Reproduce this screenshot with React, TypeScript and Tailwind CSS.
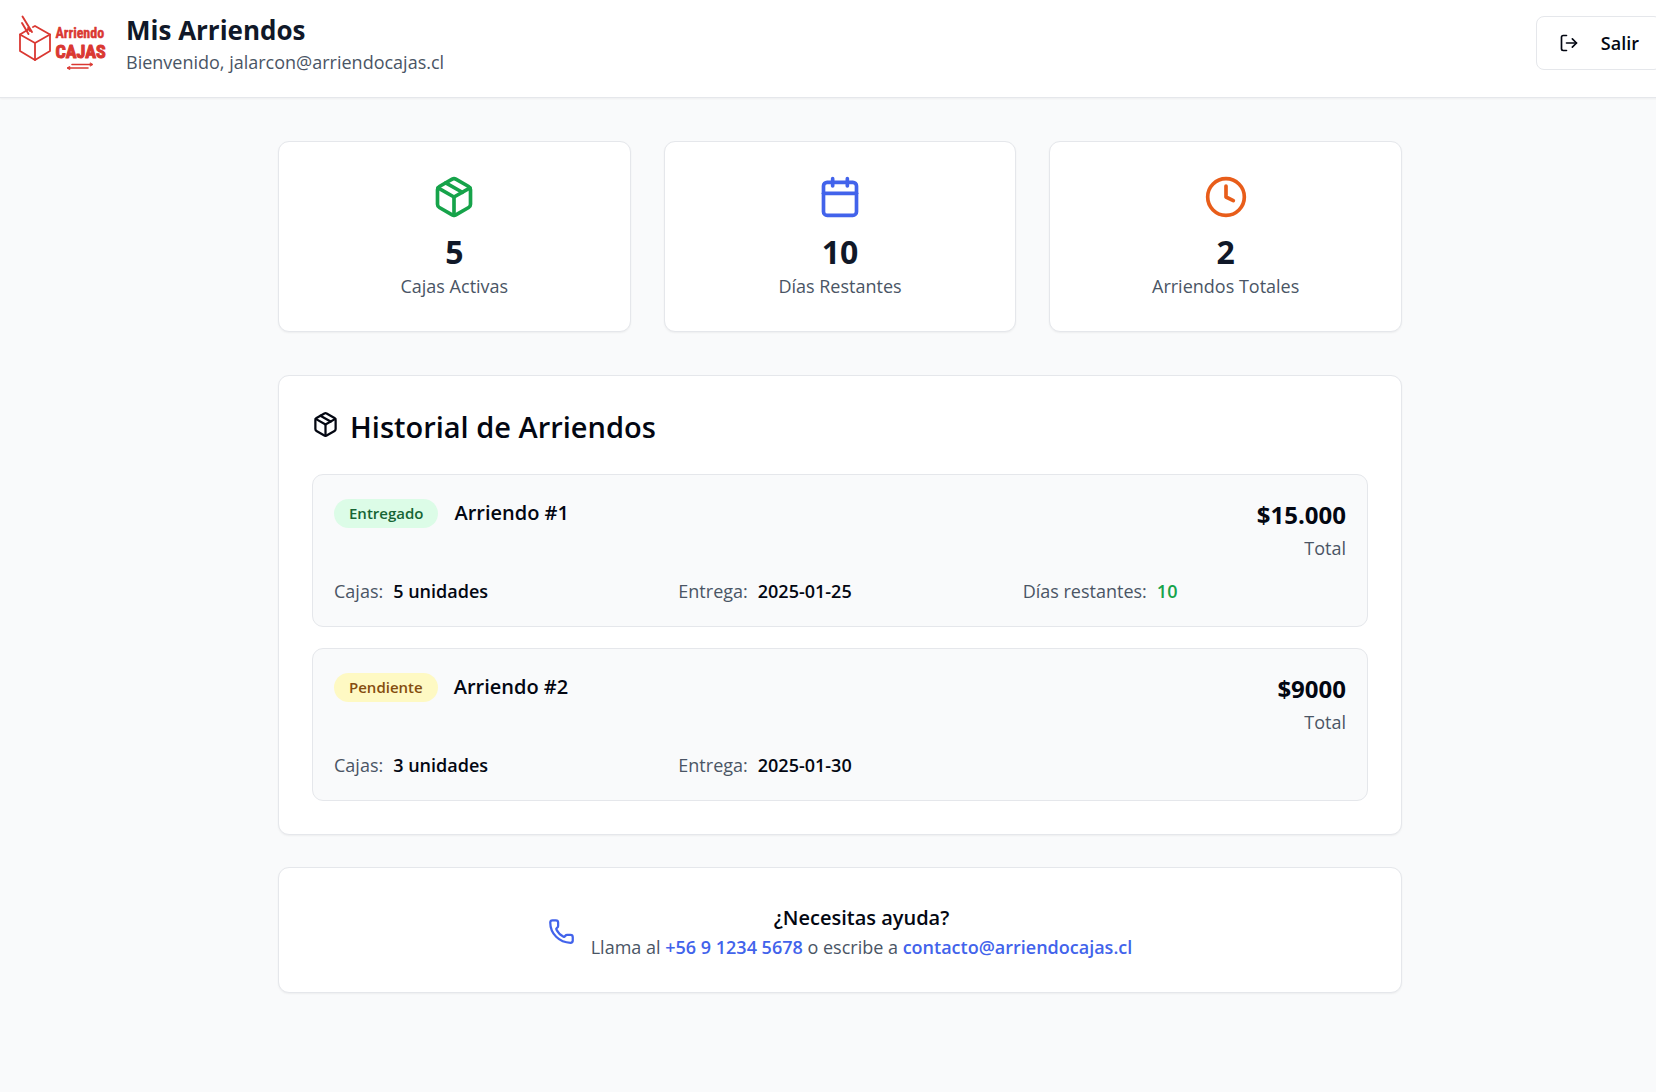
import { Calendar, Clock, LogOut, Package, Phone } from "lucide-react";
import type { ReactNode } from "react";

function Logo() {
  return (
    <svg
      viewBox="0 0 90 60"
      className="h-[60px] w-[90px] shrink-0"
      fill="none"
      stroke="#da3832"
      strokeWidth="1.8"
      strokeLinecap="round"
      strokeLinejoin="round"
      role="img"
      aria-label="Arriendo Cajas"
    >
      <path d="M11 17 2 22.500V39L17 48 32 39V22.500L17 14 15 15" />
      <path d="M2 22.500 17 31 32 22.500M17 31V48" />
      <path d="M4.500 4.500 14 20M4 11 10.500 22M10 16 12 19" strokeWidth="1.9" />
      <g fill="#da3832" strokeWidth="0.4" fontWeight="700" fontFamily="'Roboto Condensed', 'Liberation Sans Narrow', 'Liberation Sans', sans-serif">
        <text x="37.500" y="26" fontSize="14">Arriendo</text>
        <text x="37.500" y="46" fontSize="18" strokeWidth="1">CAJAS</text>
      </g>
      <path d="M54 52.500H73M50 56H70" strokeWidth="1.600" />
      <path d="M72.500 51 75 52.500 72.500 54ZM51.500 54.500 49 56 51.500 57.500Z" fill="#da3832" strokeWidth="0.8" />
    </svg>
  );
}

function Stat({ icon, value, label }: { icon: ReactNode; value: string; label: string }) {
  return (
    <div className="flex h-[191px] flex-col items-center rounded-[11px] border border-gray-200 bg-white pt-[33px] text-center shadow-xs">
      {icon}
      <p className="mt-[13px] text-[32px] leading-10 font-bold text-gray-900">{value}</p>
      <p className="text-[18px] leading-7 text-gray-600">{label}</p>
    </div>
  );
}

function Detail({ label, value, green }: { label: string; value: string; green?: boolean }) {
  return (
    <div className="flex gap-[10px] text-[18px] leading-6">
      <dt className="text-gray-600">{label}</dt>
      <dd className={green ? "font-semibold text-[#16a34a]" : "font-semibold"}>{value}</dd>
    </div>
  );
}

function Rental({
  status,
  badge,
  title,
  price,
  children,
}: {
  status: string;
  badge: string;
  title: string;
  price: string;
  children: ReactNode;
}) {
  return (
    <li className="rounded-[11px] border border-gray-200 bg-gray-50 px-[21px] pt-[22px] pb-[23px]">
      <div className="flex items-start justify-between">
        <div className="flex items-center gap-4">
          <span className={`rounded-full px-[15px] text-[15px] leading-[29px] font-semibold ${badge}`}>{status}</span>
          <h3 className="text-[20px] leading-8 font-semibold">{title}</h3>
        </div>
        <div className="text-right">
          <p className="text-[24px] leading-9 font-bold">{price}</p>
          <p className="text-[18px] leading-[30px] text-gray-600">Total</p>
        </div>
      </div>
      <dl className="mt-4 grid grid-cols-3 gap-[21px]">{children}</dl>
    </li>
  );
}

export default function App() {
  return (
    <div className="min-h-screen overflow-x-hidden bg-gray-50 font-['Open_Sans','Noto_Sans',sans-serif] text-gray-950">
      <div className="-mr-6">
        <header className="flex items-start justify-between border-b border-gray-200 bg-white px-[18px] pt-3 pb-[21px] shadow-xs">
          <div className="flex items-start gap-[18px]">
            <Logo />
            <div>
              <h1 className="text-[26px] leading-9 font-bold text-gray-900">Mis Arriendos</h1>
              <p className="text-[18px] leading-7 text-gray-600">Bienvenido, jalarcon@arriendocajas.cl</p>
            </div>
          </div>
          <button type="button" className="mt-1 flex h-[54px] items-center gap-[22px] rounded-lg border border-gray-200 bg-white px-[22px] text-[18px] font-semibold">
            <LogOut size={20} />
            Salir
          </button>
        </header>

        <main className="mx-auto max-w-[1124px] pt-[43px] pb-[99px]">
          <section className="grid grid-cols-3 gap-[33px]">
            <Stat icon={<Package size={44} className="text-[#16a34a]" />} value="5" label="Cajas Activas" />
            <Stat icon={<Calendar size={44} className="text-[#4263eb]" />} value="10" label="Días Restantes" />
            <Stat icon={<Clock size={44} className="text-[#e85d1a]" />} value="2" label="Arriendos Totales" />
          </section>

          <section className="mt-[43px] rounded-[11px] border border-gray-200 bg-white px-[33px] pt-[31px] pb-[33px] shadow-xs">
            <h2 className="flex items-start gap-[11px] text-[29px] leading-10 font-semibold">
              <Package size={27} className="mt-1" />
              Historial de Arriendos
            </h2>
            <ul className="mt-[27px] flex flex-col gap-[21px]">
              <Rental status="Entregado" badge="bg-[#dcfce7] text-[#166534]" title="Arriendo #1" price="$15.000">
                <Detail label="Cajas:" value="5 unidades" />
                <Detail label="Entrega:" value="2025-01-25" />
                <Detail label="Días restantes:" value="10" green />
              </Rental>
              <Rental status="Pendiente" badge="bg-[#fef9c3] text-[#854d0e]" title="Arriendo #2" price="$9000">
                <Detail label="Cajas:" value="3 unidades" />
                <Detail label="Entrega:" value="2025-01-30" />
              </Rental>
            </ul>
          </section>

          <section className="mt-8 flex items-center justify-center gap-4 rounded-[11px] border border-gray-200 bg-white pt-[34px] pb-8 text-center shadow-xs">
            <Phone size={27} className="text-[#4263eb]" />
            <div>
              <h3 className="text-[20px] leading-8 font-semibold">¿Necesitas ayuda?</h3>
              <p className="text-[18px] leading-[26px] text-gray-600">
                Llama al{" "}
                <a href="tel:+56912345678" className="font-semibold text-[#4263eb]">+56 9 1234 5678</a>
                {" "}o escribe a{" "}
                <a href="mailto:contacto@arriendocajas.cl" className="font-semibold text-[#4263eb]">contacto@arriendocajas.cl</a>
              </p>
            </div>
          </section>
        </main>
      </div>
    </div>
  );
}
